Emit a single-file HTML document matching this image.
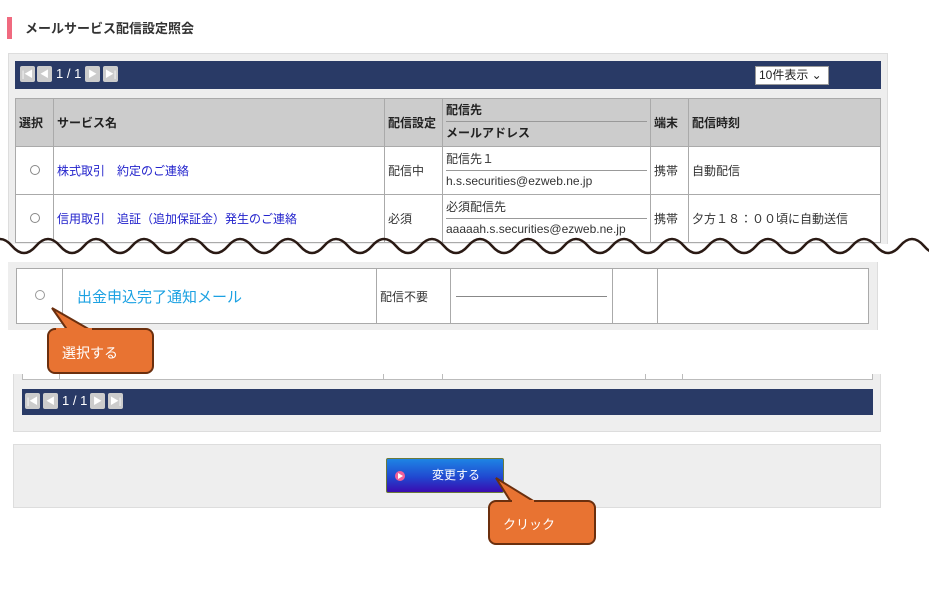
<!DOCTYPE html>
<html><head><meta charset="utf-8"><style>
*{margin:0;padding:0;box-sizing:border-box}
body{width:929px;height:594px;background:#fff;position:relative;overflow:hidden;font-family:"Liberation Sans","Noto Sans CJK JP",sans-serif;font-size:12px;color:#333}
.a{position:absolute}
.nav{background:#293a66}
.pb{position:absolute;top:5px;width:15px;height:16px;background:#ccc;border-radius:2px;color:#fff;font-size:9px;text-align:center;line-height:16px}
table{border-collapse:collapse;position:absolute;table-layout:fixed}
td,th{border:1px solid #aaa;font-size:12px;text-align:left;padding:0 3px;font-weight:normal}
th{background:#ccc;font-weight:bold;color:#222}
a{color:#22c;text-decoration:none}
.rad{display:inline-block;width:10px;height:10px;border:1px solid #888;border-radius:50%}
.co{position:absolute;background:#e87332;border:2px solid #6b2f0e;border-radius:8px;color:#fff;font-size:14px}
</style></head><body>
<div class="a" style="left:7px;top:17px;width:5px;height:22px;background:#f06a7f"></div>
<div class="a" style="left:25px;top:18px;font-size:13px;font-weight:bold;color:#333">メールサービス配信設定照会</div>

<div class="a" style="left:8px;top:53px;width:880px;height:200px;background:#eee;border:1px solid #ddd"></div>
<div class="a nav" style="left:15px;top:61px;width:866px;height:28px">
<div class="pb" style="left:5px">|◀</div><div class="pb" style="left:22px">◀</div>
<div class="a" style="left:41px;top:5px;color:#fff;font-size:13px;line-height:16px">1 / 1</div>
<div class="pb" style="left:70px">▶</div><div class="pb" style="left:88px">▶|</div>
<div class="a" style="left:740px;top:5px;width:74px;height:19px;background:#fff;border:1px solid #999;font-size:12px;line-height:17px;padding-left:3px;color:#222">10件表示 ⌄</div>
</div>
<table style="left:15px;top:98px;width:866px">
<colgroup><col style="width:38px"><col style="width:331px"><col style="width:58px"><col style="width:208px"><col style="width:38px"><col></colgroup>
<tr style="height:48px"><th>選択</th><th>サービス名</th><th>配信設定</th><th style="padding:0"><div style="height:23px;line-height:23px;border-bottom:1px solid #999;margin:0 3px">配信先</div><div style="height:24px;line-height:22px;padding-left:3px">メールアドレス</div></th><th>端末</th><th>配信時刻</th></tr>
<tr style="height:48px;background:#fff"><td style="text-align:center"><span class="rad"></span></td><td><a>株式取引　約定のご連絡</a></td><td>配信中</td><td style="padding:0"><div style="height:24px;line-height:24px;border-bottom:1px solid #999;margin:0 3px">配信先１</div><div style="height:23px;line-height:20px;padding-left:3px">h.s.securities@ezweb.ne.jp</div></td><td>携帯</td><td>自動配信</td></tr>
<tr style="height:48px;background:#fff"><td style="text-align:center"><span class="rad"></span></td><td><a>信用取引　追証（追加保証金）発生のご連絡</a></td><td>必須</td><td style="padding:0"><div style="height:24px;line-height:24px;border-bottom:1px solid #999;margin:0 3px">必須配信先</div><div style="height:23px;line-height:20px;padding-left:3px">aaaaah.s.securities@ezweb.ne.jp</div></td><td>携帯</td><td>夕方１８：００頃に自動送信</td></tr>
</table>
<div class="a" style="left:0;top:244px;width:929px;height:18px;background:#fff"></div>
<svg class="a" style="left:0;top:236px" width="929" height="22"><path d="M-12 10 q12 -14 24 0 t24 0 t24 0 t24 0 t24 0 t24 0 t24 0 t24 0 t24 0 t24 0 t24 0 t24 0 t24 0 t24 0 t24 0 t24 0 t24 0 t24 0 t24 0 t24 0 t24 0 t24 0 t24 0 t24 0 t24 0 t24 0 t24 0 t24 0 t24 0 t24 0 t24 0 t24 0 t24 0 t24 0 t24 0 t24 0 t24 0 t24 0 t24 0 t24 0 t24 0" fill="none" stroke="#2a1a14" stroke-width="2.5"/></svg>

<div class="a" style="left:8px;top:262px;width:870px;height:68px;background:#eee;border-right:1px solid #ddd"></div>
<table style="left:16px;top:268px;width:853px;background:#fff">
<colgroup><col style="width:46px"><col style="width:314px"><col style="width:74px"><col style="width:162px"><col style="width:45px"><col></colgroup>
<tr style="height:55px"><td style="text-align:center"><span class="rad" style="border-color:#999"></span></td><td style="padding-left:14px;font-size:15px;color:#1ba1e2">出金申込完了通知メール</td><td>配信不要</td><td><div style="border-top:1px solid #888;margin:0 2px"></div></td><td></td><td></td></tr>
</table>

<div class="a" style="left:13px;top:374px;width:868px;height:58px;background:#eee;border:1px solid #ddd;border-top:none"></div>
<div class="a" style="left:22px;top:374px;width:851px;height:6px;background:#fff;border:1px solid #bbb;border-top:none"></div>
<div class="a" style="left:59px;top:374px;width:1px;height:6px;background:#bbb"></div>
<div class="a" style="left:383px;top:374px;width:1px;height:6px;background:#bbb"></div>
<div class="a" style="left:442px;top:374px;width:1px;height:6px;background:#bbb"></div>
<div class="a" style="left:645px;top:374px;width:1px;height:6px;background:#bbb"></div>
<div class="a" style="left:682px;top:374px;width:1px;height:6px;background:#bbb"></div>
<div class="a nav" style="left:22px;top:389px;width:851px;height:26px">
<div class="pb" style="left:3px;top:4px">|◀</div><div class="pb" style="left:21px;top:4px">◀</div>
<div class="a" style="left:40px;top:4px;color:#fff;font-size:13px;line-height:16px">1 / 1</div>
<div class="pb" style="left:68px;top:4px">▶</div><div class="pb" style="left:86px;top:4px">▶|</div>
</div>

<div class="a" style="left:13px;top:444px;width:868px;height:64px;background:#eee;border:1px solid #ddd"></div>
<div class="a" style="left:386px;top:458px;width:118px;height:35px;border:1px solid #6b7a3a;border-radius:2px;background:linear-gradient(#1e84e4,#2048d0 55%,#3a0cb0);color:#fff;font-size:12px;line-height:33px;text-align:center;padding-left:22px">変更する
<div class="a" style="left:8px;top:12px;width:10px;height:10px;border-radius:50%;background:#f0609a"><div class="a" style="left:3px;top:2px;border-left:5px solid #fff;border-top:3px solid transparent;border-bottom:3px solid transparent"></div></div></div>

<svg class="a" style="left:40px;top:300px" width="80" height="40"><polygon points="12,8 28,31 52,31" fill="#e87332" stroke="#6b2f0e" stroke-width="2"/></svg>
<div class="co" style="left:47px;top:328px;width:107px;height:46px;padding:13px 0 0 13px">選択する</div>
<div class="a" style="left:56px;top:328px;width:36px;height:4px;background:#e87332"></div>
<svg class="a" style="left:485px;top:470px" width="80" height="40"><polygon points="11,8 26,32 50,32" fill="#e87332" stroke="#6b2f0e" stroke-width="2"/></svg>
<div class="co" style="left:488px;top:500px;width:108px;height:45px;padding:12px 0 0 13px;font-size:13px">クリック</div>
<div class="a" style="left:512px;top:500px;width:22px;height:4px;background:#e87332"></div>
</body></html>
